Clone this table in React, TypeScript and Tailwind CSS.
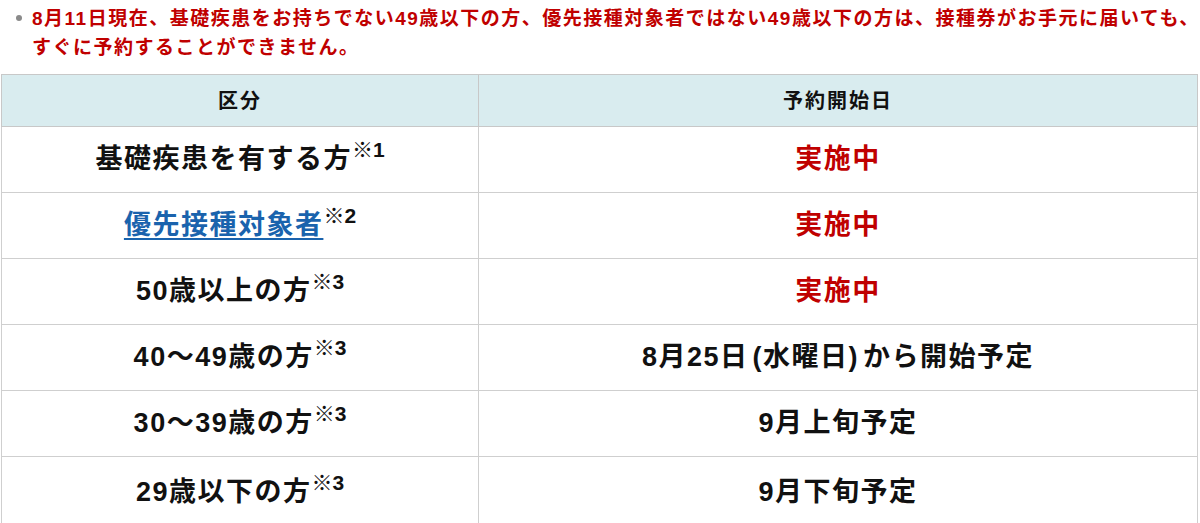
const rows: { label: string; link?: boolean; note: string; value: React.ReactNode; red?: boolean }[] = [
  { label: '基礎疾患を有する方', note: '※1', value: '実施中', red: true },
  { label: '優先接種対象者', link: true, note: '※2', value: '実施中', red: true },
  { label: '50歳以上の方', note: '※3', value: '実施中', red: true },
  {
    label: '40～49歳の方',
    note: '※3',
    value: (
      <>
        8月25日<span className="ml-[4px]">(</span>水曜日<span className="mr-[4px]">)</span>から開始予定
      </>
    ),
  },
  { label: '30～39歳の方', note: '※3', value: '9月上旬予定' },
  { label: '29歳以下の方', note: '※3', value: '9月下旬予定' },
]

export default function App() {
  return (
    <div className="h-[523px] w-[1200px] overflow-hidden bg-white font-['Liberation_Sans','Noto_Sans_CJK_JP',sans-serif]">
      <div className="flex pt-[4px]">
        <div className="w-[32px] shrink-0 pl-[16px] pt-[11px]">
          <div className="h-[6px] w-[6px] rounded-full bg-[#8a8a8a]" />
        </div>
        <p className="whitespace-nowrap text-[19px] font-bold leading-[29px] tracking-[1.5px] text-[#c00000]">
          8月11日現在、基礎疾患をお持ちでない49歳以下の方、優先接種対象者ではない49歳以下の方は、接種券がお手元に届いても、
          <br />
          すぐに予約することができません。
        </p>
      </div>

      <table className="mt-[12px] ml-[1px] w-[1197px] table-fixed border-collapse">
        <colgroup>
          <col className="w-[477px]" />
          <col />
        </colgroup>
        <thead>
          <tr className="h-[52px] bg-[#d9ecef]">
            <th className="border border-[#c8c8c8] text-[20px] font-bold tracking-[2px] text-[#111]">区分</th>
            <th className="border border-[#c8c8c8] text-[20px] font-bold tracking-[2px] text-[#111]">予約開始日</th>
          </tr>
        </thead>
        <tbody>
          {rows.map((r, i) => (
            <tr key={i} className={i === rows.length - 1 ? 'h-[72px]' : 'h-[66px]'}>
              <td className="border border-[#cfcfcf] text-center text-[27px] font-bold tracking-[1.5px] text-[#111]">
                {r.link ? (
                  <a href="#" className="text-[#1a63ad] underline decoration-[2px] underline-offset-[4px]">
                    {r.label}
                  </a>
                ) : (
                  r.label
                )}
                <sup className="top-[-0.55em] text-[21px] tracking-normal">{r.note}</sup>
              </td>
              <td
                className={
                  'border border-[#cfcfcf] text-center text-[27px] font-bold tracking-[1.5px] ' +
                  (r.red ? 'text-[#c00000]' : 'text-[#111]')
                }
              >
                {r.value}
              </td>
            </tr>
          ))}
        </tbody>
      </table>
    </div>
  )
}
